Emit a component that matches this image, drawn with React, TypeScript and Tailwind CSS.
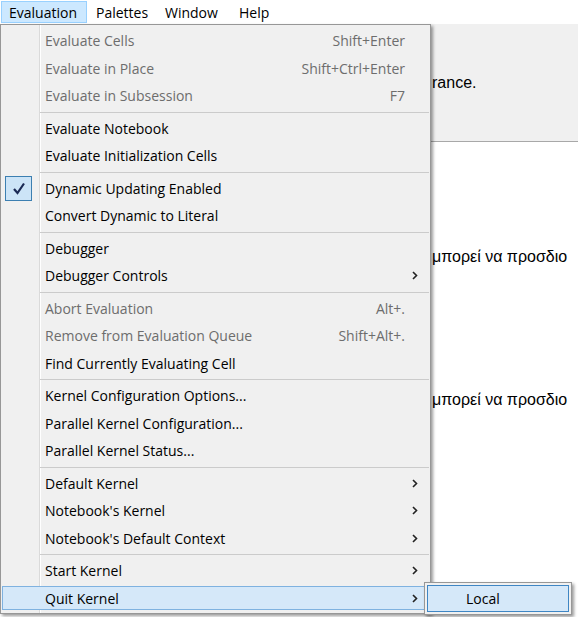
import { Fragment } from 'react';

type Item = {
    label: string;
    shortcut?: string;
    disabled?: boolean;
    arrow?: boolean;
    checked?: boolean;
    active?: boolean;
};

const groups: Item[][] = [
    [
        { label: 'Evaluate Cells', shortcut: 'Shift+Enter', disabled: true },
        { label: 'Evaluate in Place', shortcut: 'Shift+Ctrl+Enter', disabled: true },
        { label: 'Evaluate in Subsession', shortcut: 'F7', disabled: true },
    ],
    [{ label: 'Evaluate Notebook' }, { label: 'Evaluate Initialization Cells' }],
    [{ label: 'Dynamic Updating Enabled', checked: true }, { label: 'Convert Dynamic to Literal' }],
    [{ label: 'Debugger' }, { label: 'Debugger Controls', arrow: true }],
    [
        { label: 'Abort Evaluation', shortcut: 'Alt+.', disabled: true },
        { label: 'Remove from Evaluation Queue', shortcut: 'Shift+Alt+.', disabled: true },
        { label: 'Find Currently Evaluating Cell' },
    ],
    [
        { label: 'Kernel Configuration Options...' },
        { label: 'Parallel Kernel Configuration...' },
        { label: 'Parallel Kernel Status...' },
    ],
    [
        { label: 'Default Kernel', arrow: true },
        { label: "Notebook's Kernel", arrow: true },
        { label: "Notebook's Default Context", arrow: true },
    ],
    [
        { label: 'Start Kernel', arrow: true },
        { label: 'Quit Kernel', arrow: true, active: true },
    ],
];

function Chevron() {
    return (
        <svg width="6" height="9" viewBox="0 0 6 9" className="block">
            <path d="M1 1 L4.5 4.5 L1 8" fill="none" stroke="#222" strokeWidth="1.6" />
        </svg>
    );
}

function Check() {
    return (
        <div className="w-[27px] h-[25px] bg-[#cce4f7] border border-[#3c7fb1] flex items-center justify-center">
            <svg width="14" height="13" viewBox="0 0 14 13">
                <path d="M2 7 L5.5 11 L12 1.5" fill="none" stroke="#1b2a55" strokeWidth="2.2" />
            </svg>
        </div>
    );
}

function Row({ item }: { item: Item }) {
    const tone = item.disabled ? 'text-[#6d6d6d]' : 'text-black';
    return (
        <div className="relative h-[27.5px] flex items-center">
            {item.active && (
                <div className="absolute left-[1px] right-[1px] top-[1px] bottom-[2px] bg-[#d5e8f9] border border-[#7fb2e0]" />
            )}
            <div className="relative w-[44px] h-full flex items-center pl-[4px]">
                {item.checked && <Check />}
            </div>
            <span className={`relative flex-1 ${tone}`}>{item.label}</span>
            {item.shortcut && <span className={`relative ${tone}`}>{item.shortcut}</span>}
            <div className="relative w-[25px] h-full flex items-center pl-[7px]">
                {item.arrow && <Chevron />}
            </div>
        </div>
    );
}

export default function App() {
    return (
        <div className="relative w-[578px] h-[617px] overflow-hidden bg-white font-['Open_Sans',sans-serif] text-[14px]">
            {/* Menu bar */}
            <div className="h-[24px] flex items-stretch bg-white text-black">
                <div className="w-[86px] ml-[1px] my-[1px] flex items-center pl-[7px] bg-[#cce8ff] border border-[#99d1ff]">Evaluation</div>
                <div className="w-[69px] flex items-center pl-[9px]">Palettes</div>
                <div className="w-[73px] flex items-center pl-[9px]">Window</div>
                <div className="w-[50px] flex items-center pl-[10px]">Help</div>
            </div>

            {/* Notebook behind the menu */}
            <div className="h-[118px] bg-[#f0f0f0] border-b border-[#a8a8a8] pt-[50px] pl-[432px] font-['Liberation_Sans',Arial,sans-serif] text-[16px] leading-[18px] text-black">
                rance.
            </div>
            <div className="pl-[432px] pt-[106px] font-['Liberation_Sans',Arial,sans-serif] text-[16px] leading-[18px] text-black whitespace-nowrap overflow-hidden">
                <p>μπορεί να προσδιο</p>
                <p className="mt-[125px]">μπορεί να προσδιο</p>
            </div>

            {/* Evaluation dropdown */}
            <div className="absolute left-0 top-[24px] w-[431px] h-[590px] border border-[#979797] bg-[#f0f0f0] bg-[linear-gradient(to_right,#f0f0f0_38px,#dadada_38px,#dadada_39px,#ffffff_39px,#ffffff_40px,#f0f0f0_40px)] pt-[2px] shadow-[2px_2px_3px_rgba(0,0,0,0.4)]">
                {groups.map((g, gi) => (
                    <Fragment key={gi}>
                        {gi > 0 && (
                            <div className="h-[5px] flex items-center pl-[39px] pr-[1px]">
                                <div className="h-px w-full bg-[#cbcbcb]" />
                            </div>
                        )}
                        {g.map((it) => (
                            <Row key={it.label} item={it} />
                        ))}
                    </Fragment>
                ))}
            </div>

            {/* Submenu */}
            <div className="absolute left-[424px] top-[582px] w-[148px] h-[33px] border border-[#979797] bg-[#f0f0f0] p-[2px] shadow-[2px_2px_3px_rgba(0,0,0,0.4)]">
                <div className="h-full bg-[#d5e8f9] border border-[#3f86c4] flex items-center pl-[38px] text-black">Local</div>
            </div>
        </div>
    );
}
